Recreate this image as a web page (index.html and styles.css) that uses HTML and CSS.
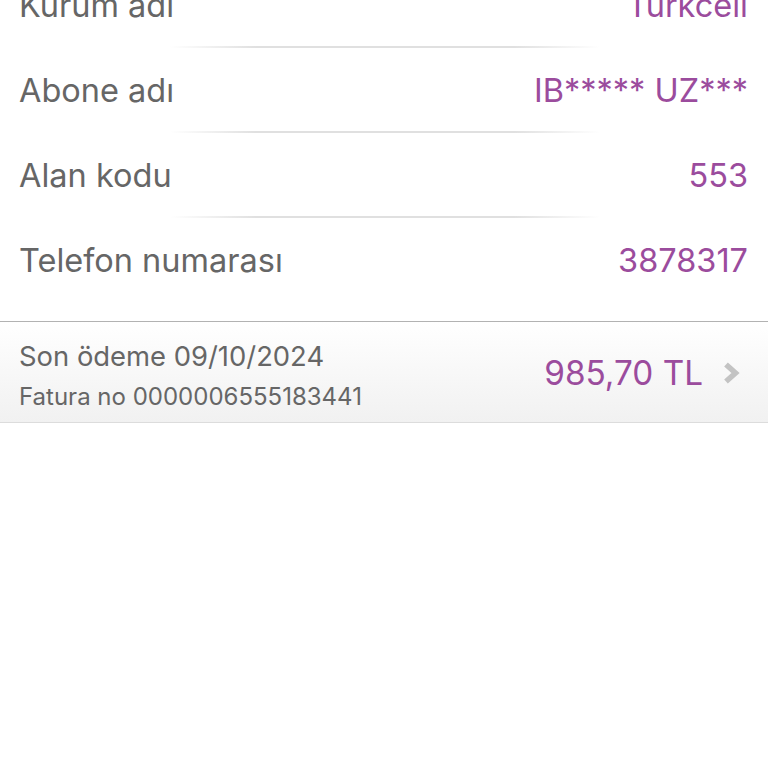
FILE: index.html
```html
<!DOCTYPE html>
<html lang="tr">
<head>
<meta charset="utf-8">
<link rel="stylesheet" href="styles.css">
</head>
<body>
<div class="details">
  <div class="row"><span class="label">Kurum adı</span><span class="value">Turkcell</span></div>
  <div class="row"><span class="label">Abone adı</span><span class="value">IB***** UZ***</span></div>
  <div class="row"><span class="label">Alan kodu</span><span class="value">553</span></div>
  <div class="row last"><span class="label">Telefon numarası</span><span class="value">3878317</span></div>
</div>
<div class="bill">
  <div class="bill-info">
    <div class="due">Son ödeme 09/10/2024</div>
    <div class="invoice">Fatura no 0000006555183441</div>
  </div>
  <div class="bill-amount">
    <span class="amount">985,70 TL</span>
    <svg class="chevron" width="19" height="24" viewBox="0 0 19 24"><path d="M4 3.5 L13.5 12 L4 20.5" fill="none" stroke="#c3c3c3" stroke-width="5.5"/></svg>
  </div>
</div>
</body>
</html>
```
FILE: styles.css
```css
html, body {
  margin: 0;
  padding: 0;
  background: #fff;
  font-family: Inter, "Noto Sans", sans-serif;
}
.details {
  margin-top: -38px;
}
.row {
  position: relative;
  height: 85px;
  display: flex;
  align-items: center;
  justify-content: space-between;
  padding: 2px 20px 0 19px;
  box-sizing: border-box;
}
.row::after {
  content: "";
  position: absolute;
  left: 170px;
  width: 430px;
  bottom: -1px;
  height: 2px;
  background: linear-gradient(to right, rgba(220,220,220,0), #e0e0e0 20%, #e0e0e0 80%, rgba(220,220,220,0));
}
.row.last::after { display: none; }
.label {
  font-size: 32.5px;
  color: #666;
}
.value {
  font-size: 32.5px;
  color: #9b4c9d;
}
.bill {
  margin-top: 19px;
  border-top: 1px solid #b2b2b2;
  border-bottom: 1px solid #dcdcdc;
  background: linear-gradient(#fff, #f1f1f1);
  height: 102px;
  box-sizing: border-box;
  display: flex;
  align-items: center;
  justify-content: space-between;
  padding: 0 27px 0 19px;
}
.bill-info {
  display: flex;
  flex-direction: column;
  gap: 9px;
  padding-top: 6px;
}
.due {
  font-size: 27.4px;
  line-height: 33px;
  color: #666;
}
.invoice {
  font-size: 24px;
  line-height: 29px;
  color: #666;
}
.bill-amount {
  display: flex;
  align-items: center;
  gap: 19px;
  padding-top: 2px;
}
.amount {
  font-size: 33.3px;
  color: #9b4c9d;
}
.chevron { display: block; }
```
